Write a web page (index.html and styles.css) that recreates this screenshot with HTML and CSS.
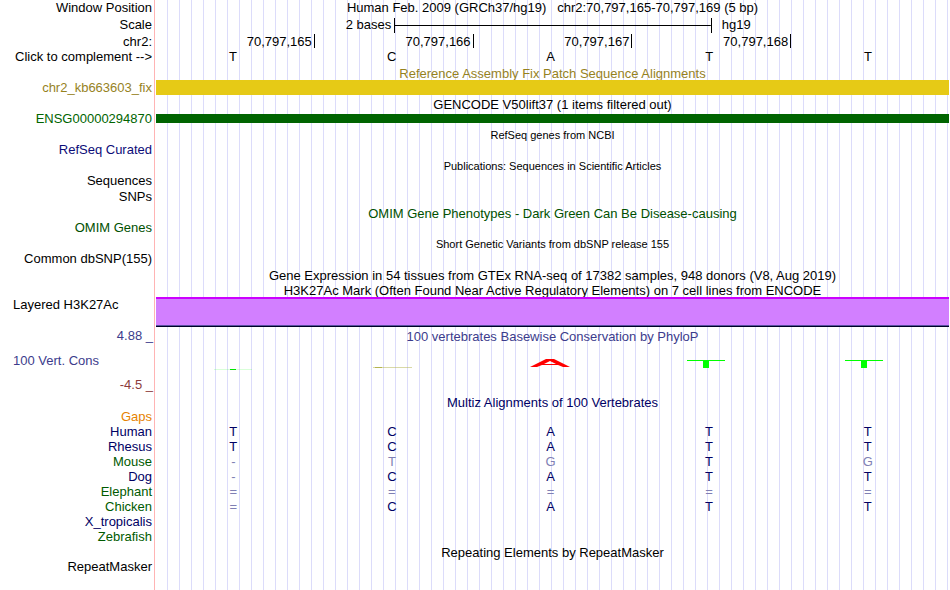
FILE: index.html
```
<!DOCTYPE html>
<html lang="en">
<head>
<meta charset="UTF-8">
<meta name="viewport" content="width=device-width, initial-scale=1.0">
<title>Human chr2:70,797,165-70,797,169</title>
<link rel="stylesheet" href="styles.css">
</head>
<body>
<main class="browser">

  <!-- ruler -->
  <section class="track">
    <div class="label ruler-row">Window Position</div>
    <div class="title ruler-row">Human Feb. 2009 (GRCh37/hg19) &nbsp; chr2:70,797,165-70,797,169 (5 bp)</div>
    <div class="label scale-row">Scale</div>
    <div class="scale">
      <span class="scale-size">2 bases</span>
      <span class="scale-bar"></span>
      <span class="scale-db">hg19</span>
    </div>
    <div class="label">chr2:</div>
    <div class="bases">
      <span class="tick">70,797,165</span>
      <span class="tick">70,797,166</span>
      <span class="tick">70,797,167</span>
      <span class="tick">70,797,168</span>
    </div>
    <div class="label ruler-row">Click to complement --&gt;</div>
    <div class="bases">
      <span class="base">T</span>
      <span class="base">C</span>
      <span class="base">A</span>
      <span class="base">T</span>
      <span class="base">T</span>
    </div>
  </section>

  <section class="track fix-patch">
    <div class="title tight">Reference Assembly Fix Patch Sequence Alignments</div>
    <div class="label">chr2_kb663603_fix</div>
    <div class="item"></div>
  </section>

  <section class="track gencode">
    <div class="title">GENCODE V50lift37 (1 items filtered out)</div>
    <div class="label">ENSG00000294870</div>
    <div class="item"></div>
  </section>

  <section class="track refseq">
    <div class="title small">RefSeq genes from NCBI</div>
    <div class="label">RefSeq Curated</div>
  </section>

  <section class="track">
    <div class="title small">Publications: Sequences in Scientific Articles</div>
    <div class="label">Sequences</div>
    <div class="label snps">SNPs</div>
  </section>

  <section class="track omim">
    <div class="title">OMIM Gene Phenotypes - Dark Green Can Be Disease-causing</div>
    <div class="label">OMIM Genes</div>
  </section>

  <section class="track">
    <div class="title small">Short Genetic Variants from dbSNP release 155</div>
    <div class="label">Common dbSNP(155)</div>
  </section>

  <section class="track">
    <div class="title">Gene Expression in 54 tissues from GTEx RNA-seq of 17382 samples, 948 donors (V8, Aug 2019)</div>
  </section>

  <section class="track h3k27ac">
    <div class="title tight">H3K27Ac Mark (Often Found Near Active Regulatory Elements) on 7 cell lines from ENCODE</div>
    <div class="label wide">Layered H3K27Ac</div>
    <div class="item"></div>
  </section>

  <section class="track phylop">
    <div class="axis">
      <span class="axis-max">4.88 _</span>
      <span class="axis-name">100 Vert. Cons</span>
      <span class="axis-min">-4.5 _</span>
    </div>
    <div class="signal">
      <div class="title">100 vertebrates Basewise Conservation by PhyloP</div>
      <div class="bases">
        <svg class="logo" viewBox="0 0 42 16" width="42" height="16">
          <path d="M0 11.5h38" stroke="#00ff00" stroke-opacity=".15"/>
          <path d="M16 11.5h6" stroke="#00e400"/>
        </svg>
        <svg class="logo" viewBox="0 0 42 16" width="42" height="16">
          <path d="M1 9.5h39" stroke="#b4b450" stroke-opacity=".5"/>
          <path d="M3 9.5h7" stroke="#b4b450"/>
        </svg>
        <svg class="logo" viewBox="0 0 42 16" width="42" height="16">
          <path d="M1 9L17 1h8l16 8h-7l-5-2H13l-5 2zM15 6h12l-6-3z" fill="#ff0000" fill-rule="evenodd"/>
        </svg>
        <svg class="logo" viewBox="0 0 42 16" width="42" height="16">
          <path d="M0 2.5h38" stroke="#00ff00"/>
          <path d="M16 2h6v8h-6z" fill="#00ff00"/>
        </svg>
        <svg class="logo" viewBox="0 0 42 16" width="42" height="16">
          <path d="M0 2.5h38" stroke="#00ff00"/>
          <path d="M16 2h6v8h-6z" fill="#00ff00"/>
        </svg>
      </div>
    </div>
  </section>

  <section class="track multiz">
    <div class="title">Multiz Alignments of 100 Vertebrates</div>
    <table class="alignment">
      <tr class="gaps"><th scope="row">Gaps</th><td></td><td></td><td></td><td></td><td></td></tr>
      <tr><th scope="row">Human</th><td>T</td><td>C</td><td>A</td><td>T</td><td>T</td></tr>
      <tr><th scope="row">Rhesus</th><td>T</td><td>C</td><td>A</td><td>T</td><td>T</td></tr>
      <tr class="alt"><th scope="row">Mouse</th><td class="diff">-</td><td class="diff">T</td><td class="diff">G</td><td>T</td><td class="diff">G</td></tr>
      <tr><th scope="row">Dog</th><td class="diff">-</td><td>C</td><td>A</td><td>T</td><td>T</td></tr>
      <tr class="alt"><th scope="row">Elephant</th><td class="diff">=</td><td class="diff">=</td><td class="diff">=</td><td class="diff">=</td><td class="diff">=</td></tr>
      <tr class="alt"><th scope="row">Chicken</th><td class="diff">=</td><td>C</td><td>A</td><td>T</td><td>T</td></tr>
      <tr><th scope="row">X_tropicalis</th><td></td><td></td><td></td><td></td><td></td></tr>
      <tr class="alt"><th scope="row">Zebrafish</th><td></td><td></td><td></td><td></td><td></td></tr>
    </table>
  </section>

  <section class="track">
    <div class="title tight">Repeating Elements by RepeatMasker</div>
    <div class="label">RepeatMasker</div>
  </section>

</main>
</body>
</html>
```
FILE: styles.css
```
body {
  margin: 0;
  background-color: #fff;
  color: #000;
  font-family: "Liberation Sans", Arial, sans-serif;
  font-size: 13px;
  line-height: 15px;
}

/* vertical guidelines every 12px, red divider after the labels */
.browser {
  min-height: 100vh;
  box-sizing: border-box;
  padding-right: 1px;
  background-image:
    linear-gradient(#ffb4b4, #ffb4b4),
    repeating-linear-gradient(to right, transparent 0, transparent 11px, #dcdcfa 11px, #dcdcfa 12px);
  background-size: 1px 100%, auto;
  background-position: 154px 0, 156px 0;
  background-repeat: no-repeat;
}

.track {
  display: grid;
  grid-template-columns: 156px minmax(0, 1fr);
}

.label {
  grid-column: 1;
  padding-right: 4px;
  text-align: right;
  white-space: nowrap;
}

.label.wide {
  padding-left: 13px;
  text-align: left;
}

.title {
  grid-column: 2;
  padding-top: 3px;
  line-height: 13px;
  text-align: center;
  white-space: nowrap;
}

.title.tight {
  padding-top: 2px;
}

.small {
  font-size: 11px;
}

.item {
  grid-column: 2;
}

.snps {
  padding-top: 1px;
}

/* ruler */
.ruler-row {
  padding-top: 0;
  line-height: 16px;
}

.scale-row,
.scale {
  line-height: 18px;
}

.scale {
  display: grid;
  grid-template-columns: 30% 40% 30%;
  align-items: center;
  margin-right: -1px;
}

.scale-size {
  padding-right: 3px;
  text-align: right;
}

.scale-bar {
  height: 15px;
  border: solid #000;
  border-width: 0 1px;
  background: linear-gradient(#000, #000) center / 100% 1px no-repeat;
}

.scale-db {
  padding-left: 10px;
}

.bases {
  display: grid;
  grid-template-columns: repeat(5, 1fr);
  margin-right: -1px;
}

.tick {
  height: 14px;
  padding-right: 2px;
  border-right: 1px solid #000;
  text-align: right;
}

.base {
  padding-right: 5px;
  text-align: center;
}

/* tracks */
.fix-patch {
  color: #96821e;
}

.fix-patch .item {
  background-color: #e6ca16;
}

.gencode .label {
  color: #006400;
}

.gencode .item {
  height: 9px;
  align-self: center;
  background-color: #006400;
}

.refseq .label {
  color: #0c0c78;
}

.omim {
  color: #005000;
}

.h3k27ac .item {
  height: 27px;
  border-top: 2px solid #cc00ff;
  border-bottom: 1px solid #000028;
  background-color: #d27fff;
  box-shadow: inset 0 -1px #5a50a0;
}

.phylop {
  color: #3c3c8c;
}

.axis {
  display: flex;
  flex-direction: column;
  justify-content: space-between;
  height: 64px;
  padding: 1px 3px 1px 13px;
}

.axis-max,
.axis-min {
  text-align: right;
}

.axis-min {
  color: #8c3c3c;
}

.logo {
  display: block;
  margin: 15px auto 0;
}

.phylop .bases {
  padding-right: 5px;
}

.multiz {
  color: #000064;
}

.alignment {
  grid-column: 1 / 3;
  width: 100%;
  table-layout: fixed;
  border-collapse: collapse;
}

.alignment th {
  width: 152px;
  padding: 0 4px 0 0;
  font-weight: normal;
  text-align: right;
}

.alignment td {
  height: 15px;
  padding: 0 4px 0 0;
  text-align: center;
}

.alignment .alt th {
  color: #005a00;
}

.alignment .gaps th {
  color: #e68200;
}

.alignment .diff {
  color: #8080b4;
}
```
